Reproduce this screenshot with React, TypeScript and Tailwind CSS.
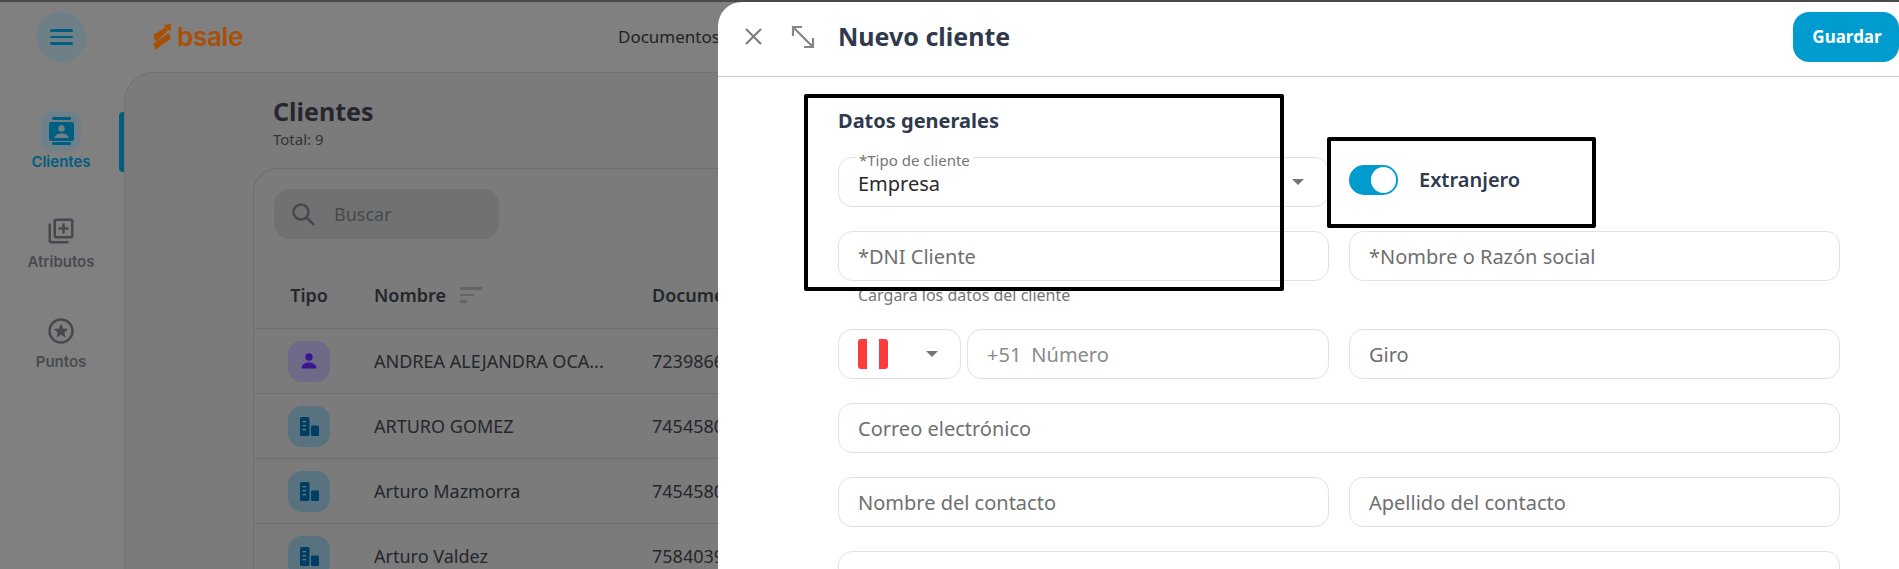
import React from 'react';

const rows = [
  { name: 'ANDREA ALEJANDRA OCA...', doc: '72398664', person: true },
  { name: 'ARTURO GOMEZ', doc: '74545802', person: false },
  { name: 'Arturo Mazmorra', doc: '74545803', person: false },
  { name: 'Arturo Valdez', doc: '75840391', person: false },
];

function ContactsIcon() {
  return (
    <svg width="25" height="28" viewBox="0 0 25 28">
      <rect x="3" y="0" width="19" height="3" rx="1.2" fill="#005f80" />
      <rect x="3" y="25" width="19" height="3" rx="1.2" fill="#005f80" />
      <rect x="0" y="5" width="25" height="19" rx="2" fill="#005f80" />
      <circle cx="12.5" cy="11.5" r="3.2" fill="#70808a" />
      <path d="M5.5 21c0-3 3.5-4.4 7-4.4s7 1.4 7 4.4z" fill="#70808a" />
    </svg>
  );
}

function LibraryAddIcon() {
  return (
    <svg width="30" height="30" viewBox="0 0 24 24" fill="#47484d">
      <path d="M4 6H2v14c0 1.1.9 2 2 2h14v-2H4V6zm16-4H8c-1.1 0-2 .9-2 2v12c0 1.1.9 2 2 2h12c1.1 0 2-.9 2-2V4c0-1.1-.9-2-2-2zm0 14H8V4h12v12zm-7-2h2v-3h3V9h-3V6h-2v3h-3v2h3z" />
    </svg>
  );
}

function PointsIcon() {
  return (
    <svg width="26" height="26" viewBox="0 0 26 26">
      <circle cx="13" cy="13" r="11.5" fill="none" stroke="#47484d" strokeWidth="2.4" />
      <path d="M13 5.8l2.1 4.7 5.1.5-3.8 3.4 1.1 5-4.5-2.6-4.5 2.6 1.1-5L5.800 11l5.100-.5z" fill="#47484d" />
    </svg>
  );
}

function BuildingIcon() {
  return (
    <svg width="19" height="19" viewBox="0 0 19 19">
      <rect x="0" y="0" width="9.500" height="19" rx="1.500" fill="#003f63" />
      <rect x="11" y="8.500" width="8" height="10.500" rx="1.200" fill="#003f63" />
      <rect x="2.500" y="4" width="3.500" height="1.300" fill="#5f7d8c" />
      <rect x="2.500" y="8" width="3.500" height="1.300" fill="#5f7d8c" />
      <rect x="2.500" y="12" width="3.500" height="1.300" fill="#5f7d8c" />
    </svg>
  );
}

function PersonIcon() {
  return (
    <svg width="16" height="16" viewBox="0 0 16 16">
      <circle cx="8" cy="4" r="3.700" fill="#3a1791" />
      <path d="M0.500 15.500c0-3.600 3-6 7.500-6s7.500 2.400 7.500 6z" fill="#3a1791" />
    </svg>
  );
}

function LogoMark() {
  return (
    <svg className="shrink-0" width="19" height="26" viewBox="0 0 19 26">
      <path d="M1 10.500L12.500 3.200 10.500 1 18 0 17.500 7.500 15.500 5.800 3.200 17.500 1 15z" fill="#a84f08" />
      <path d="M15.500 9L18 14.500 2 26 0.500 19.500z" fill="#a84f08" />
    </svg>
  );
}

function Caret() {
  return <div className="w-0 h-0 border-x-[6px] border-x-transparent border-t-[6px] border-t-[#757575]" />;
}

function Field({ label }: { label: string }) {
  return (
    <div className="h-[50px] min-w-0 flex items-center rounded-[14px] border border-[#e2e2e2] pl-[19px] pt-[2px] text-[20px] text-[#6f6f6f]">
      {label}
    </div>
  );
}

export default function App() {
  return (
    <div className="relative w-[1899px] h-[569px] overflow-hidden bg-[#808080] flex flex-col font-['Noto_Sans',sans-serif]">
      <div className="h-[2px] bg-[#4a4a4a]" />

      <div className="flex flex-1 min-h-0">
        {/* Sidebar */}
        <aside className="relative w-[124px] shrink-0 flex flex-col items-center pr-[2px] pt-[10px] font-['Inter',sans-serif]">
          <div className="w-[50px] h-[50px] rounded-full bg-[#6f7f87] flex flex-col items-center justify-center gap-[4px]">
            <div className="w-[23px] h-[2.500px] rounded-full bg-[#005f80]" />
            <div className="w-[23px] h-[2.500px] rounded-full bg-[#005f80]" />
            <div className="w-[23px] h-[2.500px] rounded-full bg-[#005f80]" />
          </div>
          <nav className="mt-[49px] flex flex-col items-center">
            <div className="h-[100px] flex flex-col items-center">
              <div className="w-[40px] h-[40px] rounded-[12px] bg-[#70808a] flex items-center justify-center">
                <ContactsIcon />
              </div>
              <span className="mt-px text-[15px] leading-[20px] font-semibold text-[#005f80]">Clientes</span>
            </div>
            <div className="h-[100px] flex flex-col items-center">
              <div className="w-[40px] h-[40px] flex items-center justify-center">
                <LibraryAddIcon />
              </div>
              <span className="mt-px text-[15px] leading-[20px] font-semibold text-[#4a4a50]">Atributos</span>
            </div>
            <div className="h-[100px] flex flex-col items-center">
              <div className="w-[40px] h-[40px] flex items-center justify-center">
                <PointsIcon />
              </div>
              <span className="mt-px text-[15px] leading-[20px] font-semibold text-[#4a4a50]">Puntos</span>
            </div>
          </nav>
          <div className="absolute right-0 top-[110px] w-[5px] h-[60px] rounded-l-[4px] bg-[#005f80]" />
        </aside>

        {/* Main column */}
        <div className="flex-1 min-w-0 flex flex-col">
          <header className="h-[70px] shrink-0 flex items-center pl-[29px]">
            <div className="flex items-center gap-[5px] w-[88px] shrink-0">
              <LogoMark />
              <span className="font-['Inter',sans-serif] text-[26px] leading-none font-semibold tracking-[-0.3px] text-[#a84f08]">bsale</span>
            </div>
            <span className="ml-[377px] text-[17px] text-[#222222] whitespace-nowrap">Documentos</span>
          </header>

          <main className="flex-1 min-h-0 rounded-tl-[30px] border-l border-t border-[#727272] bg-[#7b7b7b] pl-[128px] pt-[22px]">
            <div className="pl-[20px]">
              <h1 className="text-[25px] leading-[32px] font-bold text-[#25272c]">Clientes</h1>
              <p className="mt-[2px] text-[15px] leading-[20px] text-[#333333]">Total: 9</p>
            </div>
            <section className="mt-[19px] h-[420px] rounded-tl-[24px] border-l border-t border-[#6e6e6e]">
              <div className="ml-[20px] mt-[20px] w-[225px] h-[50px] rounded-[16px] bg-[#707173] flex items-center pl-[18px] gap-[19px] text-[#4a4a4a]">
                <svg width="23" height="23" viewBox="0 0 23 23" fill="none" stroke="#47484d" strokeWidth="2.500">
                  <circle cx="9" cy="9" r="7.500" />
                  <path d="M14.500 14.500L22 22" />
                </svg>
                <span className="text-[18px]">Buscar</span>
              </div>

              <div className="h-[89px] flex pt-[44px] text-[18px] leading-[24px] font-semibold text-[#23262b]">
                <div className="w-[110px] text-center">Tipo</div>
                <div className="w-[288px] h-[24px] pl-[10px] flex items-center gap-[14px]">
                  Nombre
                  <div className="flex flex-col gap-[4px]">
                    <div className="w-[22px] h-[2.500px] bg-[#646464]" />
                    <div className="w-[14px] h-[2.500px] bg-[#646464]" />
                    <div className="w-[7px] h-[2.500px] bg-[#646464]" />
                  </div>
                </div>
                <div>Documento</div>
              </div>

              {rows.map((row) => (
                <div key={row.name} className="h-[65px] flex items-center border-t border-[#6e6e6e] text-[18px] text-[#25272c]">
                  <div className="w-[110px] flex justify-center">
                    <div
                      className={`w-[42px] h-[41px] rounded-[14px] flex items-center justify-center ${
                        row.person ? 'bg-[#6e6a87]' : 'bg-[#58727f]'
                      }`}
                    >
                      {row.person ? <PersonIcon /> : <BuildingIcon />}
                    </div>
                  </div>
                  <div className="w-[288px] pl-[10px] whitespace-nowrap">{row.name}</div>
                  <div>{row.doc}</div>
                </div>
              ))}
            </section>
          </main>
        </div>
      </div>

      {/* Nuevo cliente panel */}
      <div className="absolute left-[718px] right-0 top-[2px] bottom-0 rounded-tl-[24px] bg-white flex flex-col">
        <div className="h-[75px] shrink-0 flex items-center border-b border-[#c9c9d4] pl-[27px] pb-[5px]">
          <svg width="17" height="17" viewBox="0 0 17 17" fill="none" stroke="#7a7a7a" strokeWidth="2">
            <path d="M1 1l15 15M16 1L1 16" />
          </svg>
          <svg className="ml-[29px]" width="24" height="24" viewBox="0 0 24 24" fill="none" stroke="#858585" strokeWidth="2.200">
            <path d="M2 2l20 20M2 11V2h9M22 13v9h-9" />
          </svg>
          <h2 className="ml-[23px] text-[25px] font-bold text-[#2f3a4d]">Nuevo cliente</h2>
          <button className="ml-auto h-[50px] w-[106px] rounded-[16px] bg-[#009ccf] pl-[2px] text-[17px] font-bold text-white">Guardar</button>
        </div>

        <div className="pl-[120px] w-[1122px]">
          <h3 className="mt-[32px] h-[24px] leading-[24px] text-[20px] font-bold text-[#2f3a4d]">Datos generales</h3>

          <div className="mt-[24px] grid grid-cols-2 gap-[20px]">
            <div className="relative h-[50px] rounded-[14px] border border-[#e2e2e2] pl-[19px] pr-[24px] flex items-center justify-between text-[20px] text-[#2b2b2b]">
              <span className="pt-[3px]">Empresa</span>
              <Caret />
              <span className="absolute left-[17px] top-[-7px] bg-white px-[3px] text-[15px] leading-[18px] text-[#757575]">*Tipo de cliente</span>
            </div>
            <div className="flex items-center gap-[21px] pb-[4px]">
              <div className="w-[49px] h-[30px] rounded-full bg-[#009ccf] flex items-center justify-end pr-[2px]">
                <div className="w-[25px] h-[26px] rounded-full bg-white" />
              </div>
              <span className="text-[20px] font-semibold text-[#2f3a4d]">Extranjero</span>
            </div>
          </div>

          <div className="mt-[24px] grid grid-cols-2 gap-[20px]">
            <Field label="*DNI Cliente" />
            <Field label="*Nombre o Razón social" />
          </div>
          <p className="h-[24px] pl-[20px] pt-[4px] text-[16px] leading-[20px] text-[#757575]">Cargará los datos del cliente</p>

          <div className="mt-[24px] grid grid-cols-2 gap-[20px]">
            <div className="flex gap-[6px]">
              <div className="w-[123px] h-[50px] shrink-0 rounded-[14px] border border-[#e2e2e2] pl-[19px] flex items-center">
                <div className="w-[30px] h-[30px] rounded-[3px] bg-[linear-gradient(90deg,#fc3b3b_0,#fc3b3b_30%,#ffffff_30%,#ffffff_70%,#fc3b3b_70%)]" />
                <div className="ml-[38px]">
                  <Caret />
                </div>
              </div>
              <div className="flex-1 h-[50px] rounded-[14px] border border-[#e2e2e2] pl-[19px] pt-[2px] flex items-center gap-[10px] text-[20px] text-[#8a8a8a]">
                <span>+51</span>
                <span>Número</span>
              </div>
            </div>
            <Field label="Giro" />
          </div>

          <div className="mt-[24px] grid grid-cols-1">
            <Field label="Correo electrónico" />
          </div>

          <div className="mt-[24px] grid grid-cols-2 gap-[20px]">
            <Field label="Nombre del contacto" />
            <Field label="Apellido del contacto" />
          </div>

          <div className="mt-[24px] grid grid-cols-1">
            <Field label="" />
          </div>
        </div>
      </div>

      {/* Annotation boxes drawn on the screenshot */}
      <div className="absolute left-[804px] top-[94px] w-[480px] h-[197px] border-[4px] border-black rounded-[2px]" />
      <div className="absolute left-[1327px] top-[137px] w-[269px] h-[91px] border-[4px] border-black rounded-[2px]" />
    </div>
  );
}
